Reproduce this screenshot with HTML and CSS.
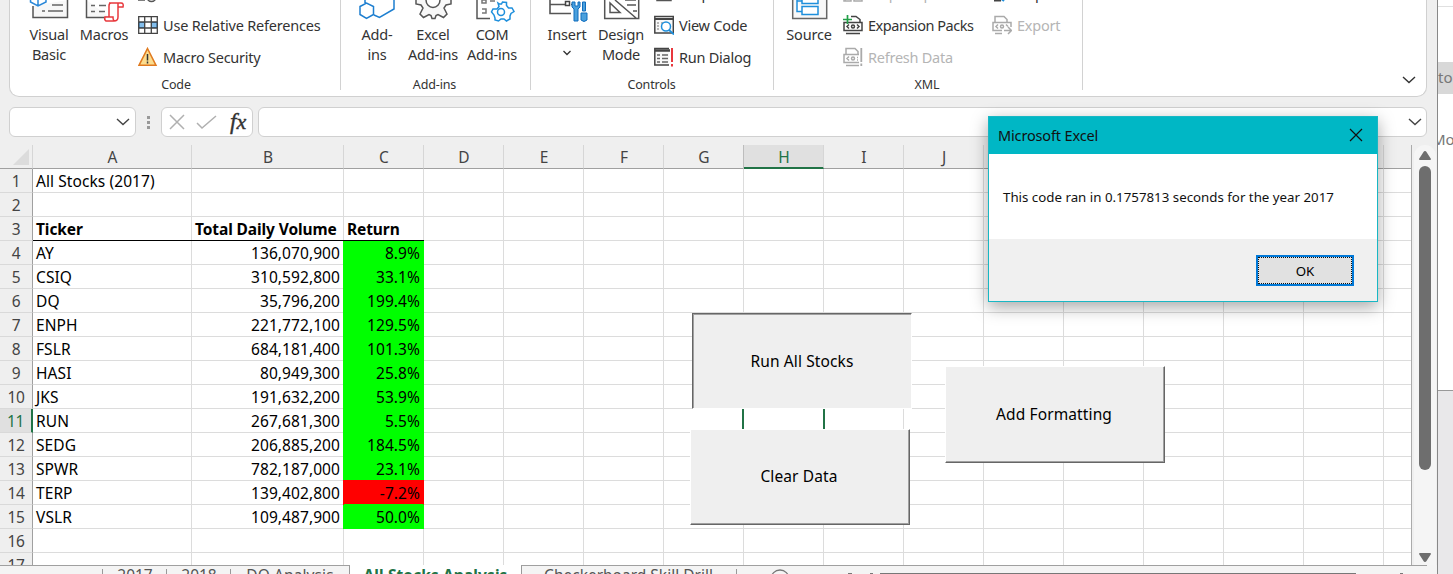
FILE: index.html
```html
<!DOCTYPE html>
<html lang="en">
<head>
<meta charset="utf-8">
<title>All Stocks Analysis</title>
<link rel="stylesheet" href="styles.css">
</head>
<body>
<div class="desktop">
<main class="excel">
  <section class="ribbon">
    <div class="group code">
      <div class="tools">
        <div class="big vb"><svg width="54" height="24" fill="none"><path d="M11 6V17.500H45.500V0" fill="#f7f7f7" stroke="#555" stroke-width="1.500"/><path d="M20 11h3M26 11h15M30 5h11" stroke="#666" stroke-width="1.300"/><path d="M8.500-4v6l7.500 4 8-4v-6M16 0v6" fill="#fff" stroke="#2b88d8" stroke-width="1.500"/></svg><span>Visual<br>Basic</span></div>
        <div class="big macros"><svg width="56" height="24" fill="none"><path d="M10.500 0V17.500H34" fill="#f7f7f7" stroke="#555" stroke-width="1.500"/><path d="M15 5.500h4M23 5.500h7M15 11.500h4M23 11.500h6" stroke="#666" stroke-width="1.300"/><path d="M33 3h12q3 0 2 4h-5v10q0 4-4 4H30q-2-1-1-4h4V6q0-3 2-3M42 7V3M29 17h8q0 4 2 4" fill="#fff" stroke="#e8383d" stroke-width="1.500"/></svg><span>Macros</span></div>
        <div class="smalls">
          <div class="small"><svg width="20" height="20" fill="none" stroke="#555" stroke-width="1.500"><path d="M0 17h7M9 14a4.500 4.500 0 0 0 9 0"/></svg></div>
          <div class="small"><svg width="20" height="20"><path d="M.7 1.700h18.600v16.600H.7z" fill="#fff"/><path d="M0 7h20v6H0z" fill="#2b88d8"/><path d="M7 7h6v6H7z" fill="#fff"/><path d="M1.500 8h4.500v4H1.500zM14 8h4.500v4H14z" fill="#83beec"/><path d="M.7 1.700h18.600v16.600H.7zM.7 7h18.600M.7 13h18.600M6.700 2v16M13.300 2v16" fill="none" stroke="#444" stroke-width="1.300"/></svg><span class="t-rel">Use Relative References</span></div>
          <div class="small"><svg width="20" height="20"><path d="M9.500 1.500 18 18.300H1z" fill="#fbdc8e" stroke="#e07a1f" stroke-width="1.500"/><path d="M9.500 7v6.500M9.500 14.500v2" stroke="#333" stroke-width="1.500"/></svg><span class="t-sec">Macro Security</span></div>
        </div>
      </div>
      <div class="label">Code</div>
    </div>
    <div class="group addins">
      <div class="tools">
        <div class="big add1"><svg width="58" height="24" fill="none" stroke="#1e7fd0" stroke-width="1.500"><path d="M12 6.500 18.500 3 25.500 6.500v8L18.500 18.500 12 14.500zM17 0v3M46 0v9L31.500 17.500 26 15"/></svg><span>Add-<br>ins</span></div>
        <div class="big add2"><svg width="54" height="24" fill="none" stroke="#555" stroke-width="1.500"><path d="M10 0v4l5 1 2 3-3 6 3.500 3.500 5.500-3 2 1 1 3h3l1-3 2-1 5.500 3 3.500-3.500-3-6 2-3 5-1V0" fill="#f8f8f8"/><path d="M20 0a7 7.500 0 0 0 14 0" fill="#fff"/></svg><span>Excel<br>Add-ins</span></div>
        <div class="big add3"><svg width="64" height="24" fill="none"><path d="M17 0v18.500h13" stroke="#555" stroke-width="1.500"/><path d="M22 0h4v3h-4zM22 9h4v4h-4M30 1h5" stroke="#777" stroke-width="1.500"/><path d="m38 3 1 3.500-2 2.500-4 0-1.500 3 2.500 3 1 3 0 2 3.500 1 2.500-2h3l2.500 2 3.500-2 0-3 1-2.500 3-2-2-3.500-3.500 0-2-2.500 0-3-4-.5-1 2h-2z" fill="#fff" stroke="#1e8fdc" stroke-width="1.500"/><circle cx="41" cy="12" r="3.500" stroke="#1e8fdc" stroke-width="1.500"/></svg><span>COM<br>Add-ins</span></div>
      </div>
      <div class="label">Add-ins</div>
    </div>
    <div class="group controls">
      <div class="tools">
        <div class="big ins"><svg width="54" height="24" fill="none"><path d="M10 0v13.500h21M10 4.500h16M31 4.500h4" stroke="#555" stroke-width="1.600"/><path d="M25.500 1.500h4v4h-4z" stroke="#444" stroke-width="1.500"/><path d="M32 2v5l2 2v12h4V9l2-2V2h-2v4h-3V2zM42.500 2h3v9h-3zM41 13h6v7q-3 3-6 0z" fill="#4aa0dd" stroke="#0f6cbd"/></svg><span>Insert</span><svg class="chev" width="8" height="20" fill="none" stroke="#333" stroke-width="1.300"><path d="m.5 7 3.500 3.500L7.500 7"/></svg></div>
        <div class="big des"><svg width="54" height="24" fill="none" stroke="#555" stroke-width="1.500"><path d="M10.700 0v18.500h34V0M16 3v9.500h10zM21 0l21 18M31 0h11M33 5h9M39 11h4"/></svg><span>Design<br>Mode</span></div>
        <div class="smalls">
          <div class="small"><svg width="20" height="20" fill="none" stroke="#555" stroke-width="1.500"><path d="M3 5v12.500h14V5"/></svg><span class="t-prop">Properties</span></div>
          <div class="small"><svg width="20" height="20" fill="none"><path d="M.8 1.500h18.500v16.500H.8z" fill="#f8f8f8" stroke="#444" stroke-width="1.500"/><path d="M1 4h18" stroke="#444" stroke-width="2"/><path d="M3 8h2M3 11h2M3 14h2M7 8h2" stroke="#777"/><circle cx="12" cy="11.500" r="4.500" fill="#fff" stroke="#1e8fdc" stroke-width="1.500"/><path d="m15 15 5 4.500" stroke="#1e8fdc" stroke-width="1.800"/></svg><span class="t-view">View Code</span></div>
          <div class="small"><svg width="20" height="20" fill="none"><path d="M15 1.500H.8v16.500H15" fill="#f8f8f8" stroke="#444" stroke-width="1.500"/><path d="M1 3.500h15" stroke="#444" stroke-width="2.500"/><path d="M3 8h3M8 8h6M3 11.500h3M8 11.500h6M3 15h3M8 15h6" stroke="#666" stroke-width="1.300"/><path d="M18 1v14M18 17v2.500" stroke="#e8383d" stroke-width="2"/></svg><span class="t-run">Run Dialog</span></div>
        </div>
      </div>
      <div class="label">Controls</div>
    </div>
    <div class="group xml">
      <div class="tools">
        <div class="big src"><svg width="56" height="24" fill="none"><path d="M11.700 0v18.500h34V0" fill="#f8f8f8" stroke="#666" stroke-width="1.500"/><path d="M16 0v11.500h5M16 1h5M21 0v3.500h16V0M21 6.500h16v8H21z" fill="#fff" stroke="#1e8fdc" stroke-width="1.500"/></svg><span>Source</span></div>
        <div class="smalls first">
          <div class="small off"><svg width="20" height="20" fill="none" stroke="#aaa" stroke-width="1.500"><path d="M1 10v8h7v-8M11 10v8h8v-8M2 17l3-3M12 15l3-2"/></svg><span class="t-map">Map Properties</span></div>
          <div class="small"><svg width="20" height="20" fill="none" stroke="#444" stroke-width="1.500"><path d="M8 1.500h5l4 3v3M1 7.500h18v8H1zM3 18.500h14"/><path d="m6 9.500-2 2 2 2M14 9.500l2 2-2 2"/><circle cx="10" cy="11.500" r="1.500"/><path d="M0 4.500h9M4.500 0v9" stroke="#23a048" stroke-width="1.700"/></svg><span class="t-exp">Expansion Packs</span></div>
          <div class="small off"><svg width="20" height="20" fill="none" stroke="#aaa" stroke-width="1.500"><path d="M3 7V1.500h9l3 3v3M16 7.500H1v8h15M3 18.500h13"/><path d="m6 9.500-2 2 2 2M14 10.500h1M14 13h1"/><circle cx="10" cy="11.500" r="1.500"/><path d="M18.300 1v14M18.300 16.500V19" stroke-width="1.800"/></svg><span class="t-ref">Refresh Data</span></div>
        </div>
        <div class="smalls second">
          <div class="small"><svg width="20" height="20" fill="none"><path d="M2 17.500h7" stroke="#444" stroke-width="2"/><path d="m7 14 5 4" stroke="#1e8fdc" stroke-width="2"/></svg><span class="t-imp">Import</span></div>
          <div class="small off"><svg width="20" height="20" fill="none" stroke="#aaa" stroke-width="1.500"><path d="M3 7V1.500h9l3 3v3M19 12V7.500H1v8h9M3 18.500h7"/><path d="m6 9.500-2 2 2 2M14 9.500l2 2M12 15.500h7M16 12l3.500 3.500L16 19"/><circle cx="10" cy="11.500" r="1.500"/></svg><span class="t-out">Export</span></div>
        </div>
      </div>
      <div class="label">XML</div>
    </div>
    <svg class="collapse" width="14" height="8" fill="none" stroke="#333" stroke-width="1.400"><path d="m1 1 6 5.500L13 1"/></svg>
  </section>

  <section class="formula">
    <div class="box name"><svg width="14" height="8" fill="none" stroke="#444" stroke-width="1.400"><path d="m1 1 6 5.500L13 1"/></svg></div>
    <div class="dots"><i></i><i></i><i></i></div>
    <div class="box fx"><svg width="48" height="18" fill="none" stroke="#b0b0b0" stroke-width="1.500"><path d="m1 2 14 14M15 2 1 16M28 10l5 5L47 3"/></svg><span>f<b>x</b></span></div>
    <div class="box input"><svg width="14" height="8" fill="none" stroke="#444" stroke-width="1.400"><path d="m1 1 6 5.500L13 1"/></svg></div>
  </section>

  <section class="work">
    <div class="sheet" id="sheet"></div>
    <div class="vscroll">
      <svg width="12" height="9" fill="#6e6e6e"><path d="M6 0q1 0 1.500 1L12 8q0 1-1 1H1Q0 9 0 8L4.500 1Q5 0 6 0"/></svg>
      <div class="thumb"></div>
      <svg class="down" width="12" height="9" fill="#6e6e6e"><path d="M6 9q1 0 1.500-1L12 1q0-1-1-1H1Q0 0 0 1L4.500 8Q5 9 6 9"/></svg>
    </div>
    <div class="shape pressed run">Run All Stocks</div>
    <div class="shape clear">Clear Data</div>
    <div class="shape fmt">Add Formatting</div>
  </section>

  <nav class="tabs">
    <div class="lead"></div>
    <div class="tab w64">2017</div>
    <div class="tab w64">2018</div>
    <div class="tab dq">DQ Analysis</div>
    <div class="tab active">All Stocks Analysis</div>
    <div class="tab cb">Checkerboard Skill Drill</div>
    <svg class="plus" width="690" height="9" fill="none"><circle cx="43" cy="13" r="9" stroke="#777" stroke-width="1.300"/><path d="M111 8h4M133 8h3M663 8h3" stroke="#777" stroke-width="2"/><path d="M143 7.500h476" stroke="#777"/></svg>
  </nav>
</main>

<aside class="behind">
  <div class="line"></div>
  <div class="chip">toc</div>
  <div class="more">Mo</div>
  <div class="wall"></div>
</aside>

<div class="dialog">
  <header><span>Microsoft Excel</span><svg width="14" height="14" fill="none" stroke="#111" stroke-width="1.200"><path d="m1 0 12 12M13 0 1 12"/></svg></header>
  <p>This code ran in 0.1757813 seconds for the year 2017</p>
  <footer><div class="ok"><span>OK</span></div></footer>
</div>
</div>
<script src="sheet.js"></script>
</body>
</html>
```
FILE: styles.css
```css
* { box-sizing: border-box; }
body { margin: 0; overflow: hidden; font-family: "Noto Sans", "Open Sans", sans-serif; }
.desktop { position: relative; width: 1453px; height: 574px; display: flex; overflow: hidden; background: #fff; }
svg { display: block; flex: none; overflow: visible; }
.excel { width: 1438px; height: 574px; flex: none; display: flex; flex-direction: column; background: #efefef; border-right: 1px solid #888; }

.ribbon { position: relative; height: 97px; margin: 0 10px 0 9px; display: flex; background: #fff; border: 1px solid #d0d0d0; border-top: 0; border-radius: 0 0 10px 10px; flex: none; overflow: hidden; }
.group { height: 90px; display: flex; flex-direction: column; border-right: 1px solid #d2d2d2; flex: none; }
.tools { display: flex; height: 76px; flex: none; }
.code { width: 331px; padding-left: 12px; }
.addins { width: 190px; padding-left: 7px; }
.controls { width: 243px; padding-left: 9px; }
.xml { width: 309px; padding-left: 7px; }
.label { font-size: 12.500px; line-height: 18px; letter-spacing: -.15px; color: #333; text-align: center; height: 18px; flex: none; }
.code .label { margin-left: -10px; }
.addins .label { margin-left: -9px; }
.controls .label { margin-left: -10px; }
.xml .label { margin-left: -9px; }
.big { display: flex; flex-direction: column; align-items: center; font-size: 14.500px; line-height: 20px; color: #333; text-align: center; letter-spacing: -.2px; white-space: nowrap; }
.vb, .add2, .ins, .des { width: 54px; }
.macros, .src { width: 56px; }
.add1 { width: 58px; }
.add3 { width: 64px; }
.smalls { margin: -22px 0 0 6px; }
.smalls.first { width: 149px; }
.smalls.second { margin-left: 0; }
.small { height: 32px; display: flex; align-items: center; gap: 5px; font-size: 14.500px; letter-spacing: -.25px; color: #333; white-space: nowrap; }
.small.off { color: #b5b5b5; }
.small svg { overflow: hidden; position: relative; top: -1px; }
.small span { margin-top: -3px; }
.t-rel { letter-spacing: -.2px; }
.t-exp { letter-spacing: -.47px; }
.collapse { position: absolute; left: 1392px; top: 76px; }

.formula { display: flex; height: 30px; margin: 10px 10px 0 9px; flex: none; }
.box { background: #fff; border: 1px solid #d0d0d0; border-radius: 6px; display: flex; align-items: center; }
.name { width: 127px; justify-content: flex-end; padding-right: 5px; }
.dots { width: 25px; display: flex; flex-direction: column; align-items: center; justify-content: center; gap: 2px; }
.dots i { width: 3px; height: 3px; background: #999; }
.fx { width: 92px; padding-left: 7px; font: italic 23px/28px "Liberation Serif", serif; color: #333; }
.fx span { margin-left: 13px; -webkit-text-stroke: .4px #333; }
.fx b { font-weight: normal; font-size: 22px; }
.input { flex: 1; margin-left: 5px; justify-content: flex-end; padding-right: 4px; }

.work { position: relative; display: flex; height: 428px; margin-top: 8px; flex: none; }
.sheet { width: 1412px; height: 420px; display: grid; grid-template-columns: 33px 159px 152px repeat(13, 80px) 28px; grid-template-rows: 24px; grid-auto-rows: 24px; overflow: hidden; background: #fff; border-right: 1px solid #ababab; }
.colh, .rowh { background: #efefef; color: #444; font-size: 15.500px; text-align: center; }
.colh { border-right: 1px solid #d6d6d6; border-bottom: 1px solid #a0a0a0; line-height: 24px; padding-left: 1px; }
.colh:nth-child(17) { border-right: 0; }
.corner { display: flex; align-items: center; justify-content: flex-end; padding-right: 3px; }
.rowh { border-right: 1px solid #a0a0a0; border-bottom: 1px solid #d9d9d9; line-height: 25px; letter-spacing: -.3px; }
.colh.sel { background: #e0e0e0; color: #217346; border-bottom: 2px solid #217346; box-shadow: -1px 0 #bdbdbd; }
.rowh.sel { background: #e0e0e0; color: #217346; border-right: 2px solid #217346; }
.cell { border-right: 1px solid #dcdcdc; border-bottom: 1px solid #dcdcdc; font-size: 15.500px; line-height: 25px; padding: 0 3px; color: #000; white-space: nowrap; letter-spacing: .08px; }
.num { text-align: right; }
.head { position: relative; height: 23px; font-weight: bold; border-bottom: 0; box-shadow: 0 1px #000; letter-spacing: -.1px; }
.up { background: #0f0; border-color: #0f0; box-shadow: -1px 0 #0f0; }
.down-val { background: #f00; border-color: #0f0; border-right-color: #f00; box-shadow: -1px -1px #f00, -1px 0 #f00, 0 -1px #f00; }
.cursor { box-shadow: -2px 0 #217346; border-right: 2px solid #217346; width: 81px; }
.vscroll { width: 22px; margin-left: 2px; height: 428px; border-radius: 11px 11px 0 0; background: #f5f5f5; padding-top: 6px; display: flex; flex-direction: column; align-items: center; }
.thumb { width: 12px; height: 304px; border-radius: 6px; background: #6e6e6e; margin-top: 6px; }
.vscroll .down { margin-top: 83px; }

.shape { position: absolute; width: 220px; height: 96px; background: #efefef; display: flex; align-items: center; justify-content: center; font-size: 15.500px; letter-spacing: .12px; color: #000; border: 1px solid; border-color: #fff #666 #666 #fff; box-shadow: inset -1px -1px #a0a0a0; }
.pressed { border-color: #666 #fff #fff #666; box-shadow: inset 1px 1px #a0a0a0; }
.run { left: 692px; top: 168px; }
.clear { left: 690px; top: 284px; padding: 0 2px 2px 0; }
.fmt { left: 945px; top: 221px; height: 97px; padding: 0 2px 2px 0; }

.tabs { display: flex; height: 9px; margin-top: -8px; background: #f4f4f4; overflow: hidden; position: relative; flex: none; }
.lead { width: 103px; border-top: 1px solid #a0a0a0; background: linear-gradient(#999, #999) right 3px / 1px 9px no-repeat; }
.tab { height: 9px; border-top: 1px solid #a0a0a0; font-size: 15.500px; line-height: 18px; color: #555; text-align: center; white-space: nowrap; background: linear-gradient(#999, #999) right 3px / 1px 9px no-repeat; }
.w64 { width: 64px; }
.dq { width: 119px; border-right: 1px solid #999; background: none; letter-spacing: .1px; }
.active { width: 171px; background: #fff; border-top-color: #fff; color: #217346; font-weight: bold; letter-spacing: .1px; }
.cb { width: 216px; border-left: 1px solid #999; padding-right: 2px; }
.plus { border-top: 1px solid #a0a0a0; }

.behind { width: 15px; height: 574px; overflow: hidden; display: flex; flex-direction: column; color: #777; font-size: 15px; line-height: 31px; }
.line { height: 7px; border-bottom: 1px solid #e0e0e0; flex: none; }
.chip { margin-top: 55px; height: 32px; background: #d8d8d8; flex: none; }
.more { height: 32px; margin: 30px 0 0 -6px; flex: none; }
.wall { margin-top: 234px; flex: 1; background: #e9e8ea; border-top: 1px solid #999; }

.dialog { position: absolute; left: 988px; top: 116px; width: 390px; height: 186px; background: #fff; border: 1px solid #18b7c4; box-shadow: 0 5px 16px rgba(0,0,0,.35); display: flex; flex-direction: column; }
.dialog header { height: 37px; background: #00b7c5; display: flex; align-items: center; justify-content: space-between; padding: 0 14px 0 9px; font-size: 14.500px; color: #111; letter-spacing: -.15px; }
.dialog header span { margin-top: -2px; }
.dialog p { margin: 0; height: 85px; padding-left: 14px; font-size: 13.300px; line-height: 86px; white-space: nowrap; color: #111; }
.dialog footer { flex: 1; background: #f0f0f0; display: flex; justify-content: flex-end; padding: 16px 23px 0 0; }
.ok { width: 98px; height: 31px; border: 2px solid #0078d7; background: #e1e1e1; display: flex; }
.ok span { flex: 1; border: 1px dotted #111; font-size: 13.300px; line-height: 26px; text-align: center; }
```
FILE: sheet.js
```js
const rows = {
  1: ["All Stocks (2017)"],
  3: ["Ticker", "Total Daily Volume", "Return"],
  4: ["AY", "136,070,900", "8.9%"],
  5: ["CSIQ", "310,592,800", "33.1%"],
  6: ["DQ", "35,796,200", "199.4%"],
  7: ["ENPH", "221,772,100", "129.5%"],
  8: ["FSLR", "684,181,400", "101.3%"],
  9: ["HASI", "80,949,300", "25.8%"],
  10: ["JKS", "191,632,200", "53.9%"],
  11: ["RUN", "267,681,300", "5.5%"],
  12: ["SEDG", "206,885,200", "184.5%"],
  13: ["SPWR", "782,187,000", "23.1%"],
  14: ["TERP", "139,402,800", "-7.2%"],
  15: ["VSLR", "109,487,900", "50.0%"]
};
const letters = "ABCDEFGHIJKLMNO".split("").concat("");
const sheet = document.getElementById("sheet");

function add(className, text) {
  const el = document.createElement("div");
  el.className = className;
  el.textContent = text;
  sheet.append(el);
  return el;
}

add("colh corner", "").innerHTML =
  '<svg width="16" height="16"><path d="M16 0v16H0z" fill="#dcdcdc"/></svg>';
letters.forEach(l => add(l === "H" ? "colh sel" : "colh", l));

for (let r = 1; r <= 17; r++) {
  add(r === 11 ? "rowh sel" : "rowh", r);
  letters.forEach((l, i) => {
    let cls = "cell";
    const text = (rows[r] || [])[i] || "";
    if (r === 3 && i < 3) cls += " head";
    if (r > 3 && text && i > 0) cls += " num";
    if (r > 3 && text && i === 2) cls += text[0] === "-" ? " down-val" : " up";
    if (r === 11 && l === "H") cls += " cursor";
    add(cls, text);
  });
}
```
